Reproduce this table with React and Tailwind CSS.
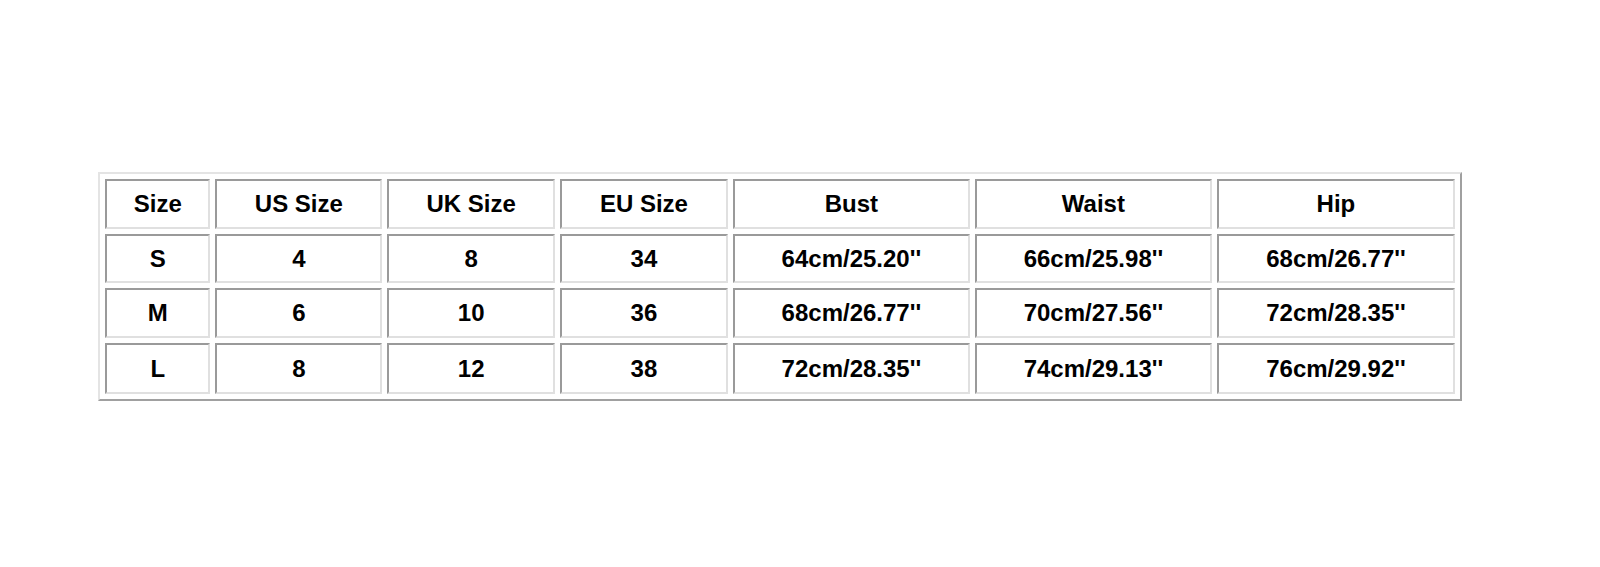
import React from "react";

const widths = [106, 168, 169, 169, 238, 238, 239];
const heights = [50, 49, 50, 51];

const rows = [
  ["Size", "US Size", "UK Size", "EU Size", "Bust", "Waist", "Hip"],
  ["S", "4", "8", "34", "64cm/25.20''", "66cm/25.98''", "68cm/26.77''"],
  ["M", "6", "10", "36", "68cm/26.77''", "70cm/27.56''", "72cm/28.35''"],
  ["L", "8", "12", "38", "72cm/28.35''", "74cm/29.13''", "76cm/29.92''"],
];

export default function App() {
  return (
    <div className="w-[1600px] h-[567px] bg-white pt-[172px] pl-[98px] font-['Liberation_Sans',Arial,sans-serif]">
      <table className="border-separate border-spacing-[5px] border-2 border-t-[#e4e4e4] border-l-[#e4e4e4] border-b-[#a0a0a0] border-r-[#a0a0a0] w-[1364px]">
        <tbody>
          {rows.map((row, r) => (
            <tr key={r}>
              {row.map((cell, c) => (
                <td
                  key={c}
                  style={{ width: widths[c], height: heights[r] }}
                  className="border-2 border-t-[#9a9a9a] border-l-[#9a9a9a] border-b-[#e0e0e0] border-r-[#e0e0e0] text-center align-middle text-[24px] font-bold text-black p-0 leading-none"
                >
                  {cell}
                </td>
              ))}
            </tr>
          ))}
        </tbody>
      </table>
    </div>
  );
}
